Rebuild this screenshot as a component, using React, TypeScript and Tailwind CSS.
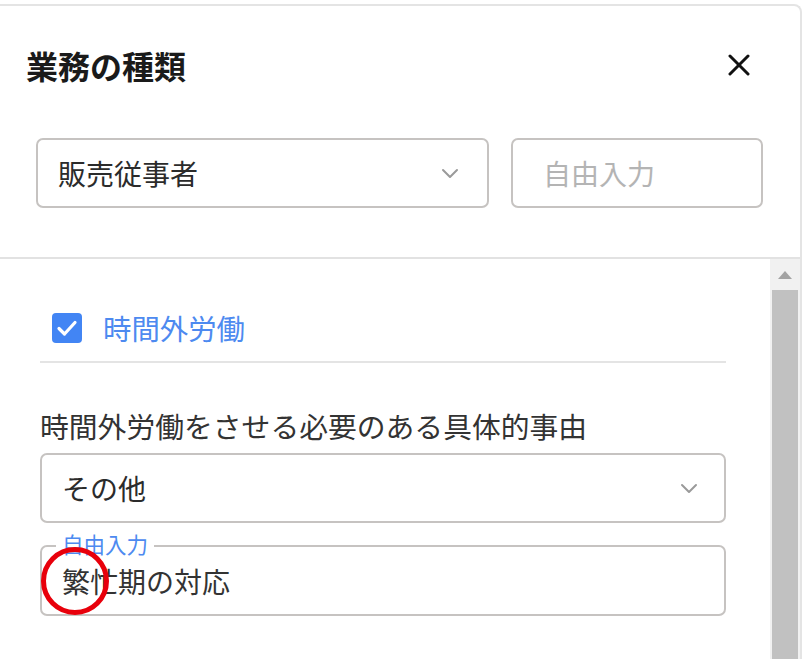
import React from "react";

function Chevron() {
  return (
    <svg width="18" height="11" viewBox="0 0 18 11" className="block">
      <polyline points="2,2 9,9 16,2" fill="none" stroke="#9a9a9a" strokeWidth="2" strokeLinecap="round" strokeLinejoin="round" />
    </svg>
  );
}

export default function App() {
  return (
    <div className="relative w-[803px] h-[659px] overflow-hidden bg-white font-['Noto_Sans_CJK_JP','Noto_Sans',sans-serif] text-[#2b2b2b]">
      <div className="mt-[4px] h-[655px] w-[802px] border-t-2 border-r-2 border-[#e4e4e4] rounded-tr-[8px] flex flex-col">
        {/* Header */}
        <div className="h-[253px] shrink-0 border-b-2 border-[#e2e2e2] flex flex-col">
          <div className="mt-[34px] h-[50px] flex items-center justify-between pl-[26px] pr-[50px]">
            <span className="text-[32px] font-bold leading-none text-[#1a1a1a]">業務の種類</span>
            <svg width="22" height="22" viewBox="0 0 22 22" className="block">
              <line x1="2" y1="2" x2="20" y2="20" stroke="#111" strokeWidth="3" strokeLinecap="round" />
              <line x1="20" y1="2" x2="2" y2="20" stroke="#111" strokeWidth="3" strokeLinecap="round" />
            </svg>
          </div>
          <div className="mt-[48px] flex gap-[22px] pl-[36px] pr-[37px]">
            <div className="w-[453px] h-[70px] border-2 border-[#c6c3c1] rounded-[7px] flex items-center justify-between pl-[20px] pr-[28px]">
              <span className="text-[28px] leading-none">販売従事者</span>
              <Chevron />
            </div>
            <div className="flex-1 h-[70px] border-2 border-[#c6c3c1] rounded-[7px] flex items-center pl-[30px]">
              <span className="text-[28px] leading-none text-[#b4b4b4]">自由入力</span>
            </div>
          </div>
        </div>
        {/* Body */}
        <div className="flex-1 flex min-h-0">
          <div className="flex-1 flex flex-col">
            <div className="mt-[54px] pl-[52px] flex items-center h-[30px]">
              <div className="w-[30px] h-[30px] rounded-[4px] bg-[#4285f4] flex items-center justify-center">
                <svg width="26" height="26" viewBox="0 0 26 26">
                  <polyline points="5,13.5 10.5,19 21,7.5" fill="none" stroke="#fff" strokeWidth="3.2" strokeLinecap="round" strokeLinejoin="round" />
                </svg>
              </div>
              <span className="ml-[21px] text-[28.4px] leading-none text-[#4d8af0]">時間外労働</span>
            </div>
            <div className="ml-[40px] mr-[44px] mt-[18px] h-[2px] bg-[#e4e4e4]" />
            <div className="px-[40px] pr-[44px] flex flex-col">
              <div className="mt-[45px] h-[36px] flex items-center">
                <span className="text-[28.8px] leading-none text-[#333]">時間外労働をさせる必要のある具体的事由</span>
              </div>
              <div className="mt-[9px] h-[70px] border-2 border-[#c6c3c1] rounded-[7px] flex items-center justify-between pl-[20px] pr-[26px]">
                <span className="text-[28px] leading-none">その他</span>
                <Chevron />
              </div>
              <div className="relative mt-[22px] h-[71px] border-2 border-[#c6c3c1] rounded-[7px] flex items-center pl-[20px]">
                <span className="absolute left-[14px] top-[-14px] bg-white px-[6px] text-[21.5px] leading-none text-[#4d8af0]">自由入力</span>
                <span className="text-[28px] leading-none text-[#333]">繁忙期の対応</span>
              </div>
            </div>
          </div>
          {/* Scrollbar */}
          <div className="w-[30px] bg-[#f1f1f1] flex flex-col items-center">
            <div className="h-[31px] w-full flex items-center justify-center">
              <svg width="14" height="8" viewBox="0 0 14 8">
                <polygon points="7,0 14,8 0,8" fill="#a3a3a3" />
              </svg>
            </div>
            <div className="flex-1 w-[26px] bg-[#c1c1c1]" />
          </div>
        </div>
      </div>
      {/* annotation */}
      <div className="absolute left-[41px] top-[547px] w-[68px] h-[68px] rounded-full border-[5px] border-[#e8000b]" />
    </div>
  );
}
